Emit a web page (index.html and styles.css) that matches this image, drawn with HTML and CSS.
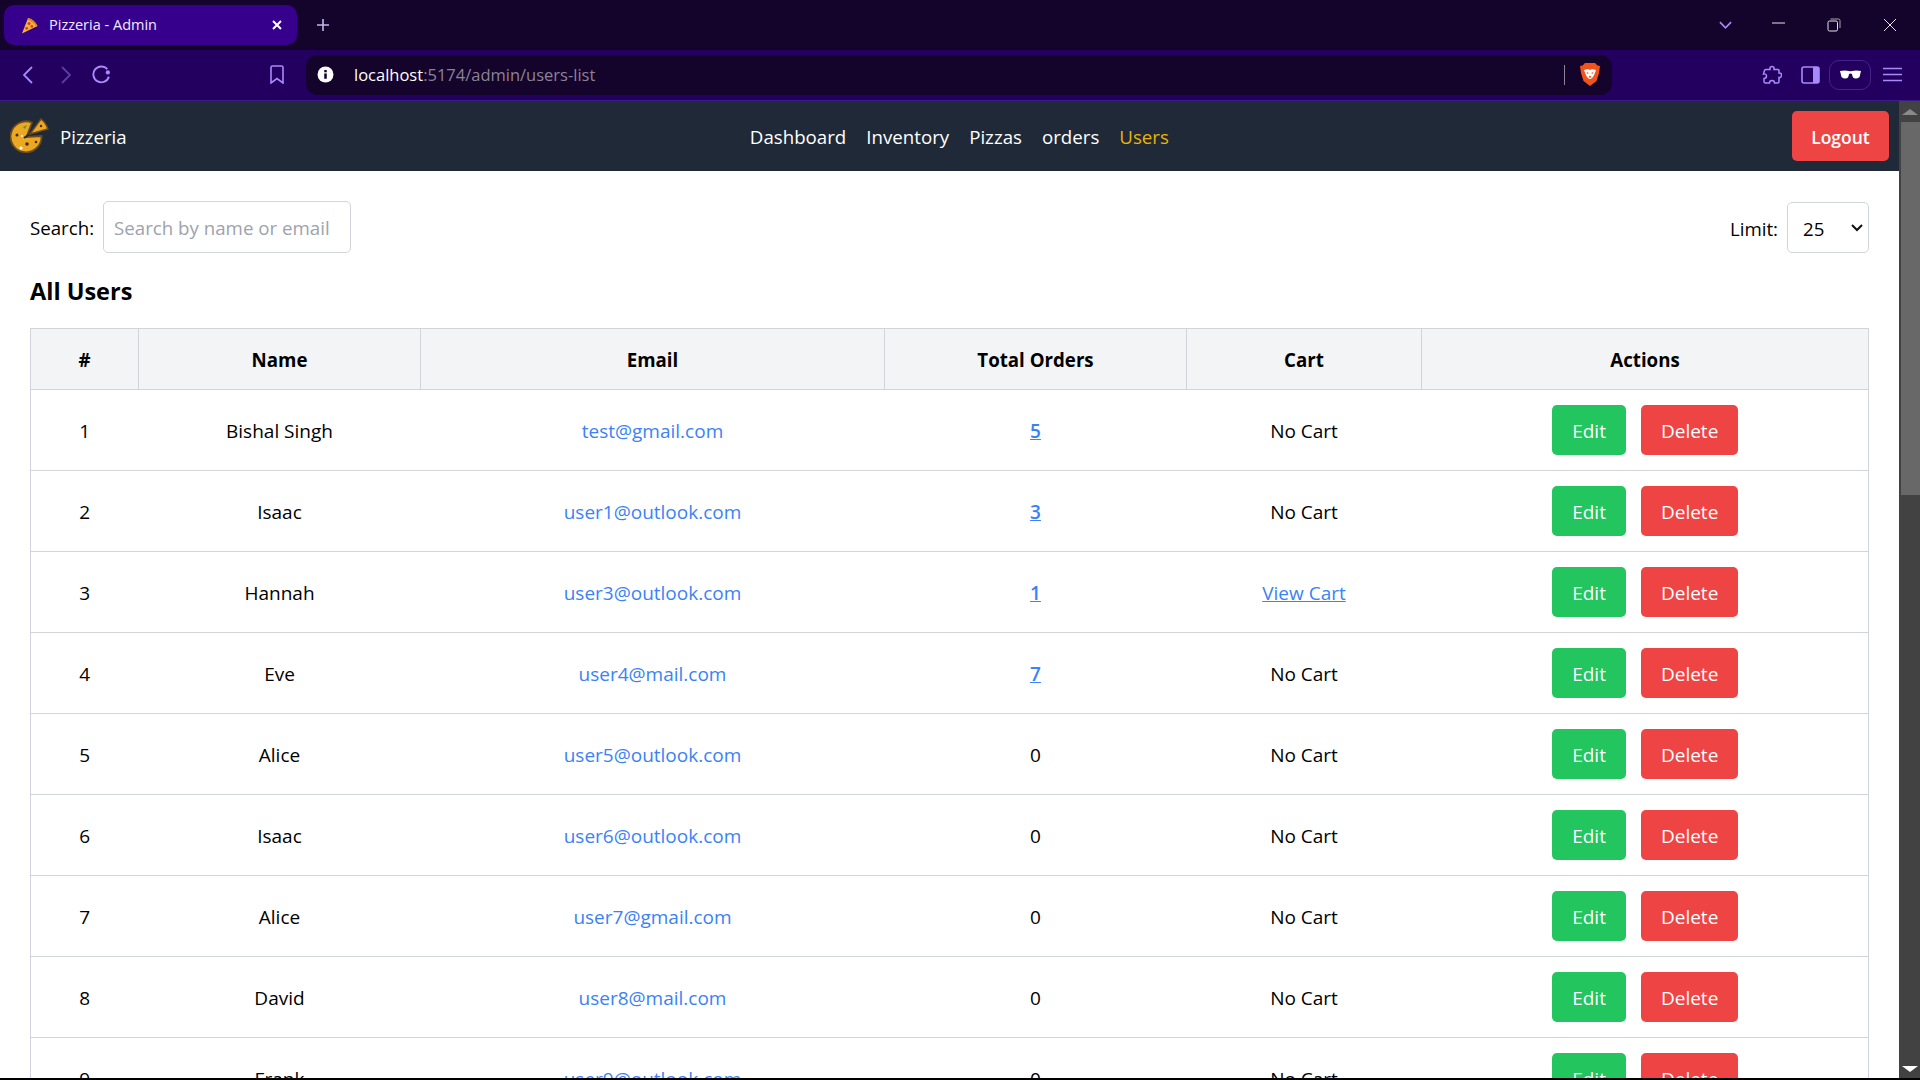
FILE: index.html
```html
<!DOCTYPE html>
<html lang="en">
<head>
<meta charset="utf-8">
<title>Pizzeria - Admin</title>
<link rel="stylesheet" href="styles.css">
</head>
<body>
<div class="titlebar">
  <div class="tab">
    <svg class="tab-favicon" viewBox="0 0 18 18"><path d="M1 17.500 L7.500 1 Q14 2.500 17.500 9.500 Z" fill="#f5b43a"/><path d="M7.500 1 Q14 2.500 17.500 9.500 L16 10.200 Q12.500 4.500 7 3 Z" fill="#d9832b"/><circle cx="8.500" cy="7" r="1.600" fill="#d6402b"/><circle cx="11.500" cy="10" r="1.500" fill="#d6402b"/><circle cx="6" cy="12" r="1.500" fill="#d6402b"/></svg>
    <span class="tab-title">Pizzeria - Admin</span>
    <svg class="tab-close" viewBox="0 0 12 12"><path d="M2 2 L10 10 M10 2 L2 10" stroke="#fff" stroke-width="2"/></svg>
  </div>
  <svg class="new-tab" viewBox="0 0 14 14"><path d="M7 1 V13 M1 7 H13" stroke="#c4b5f0" stroke-width="1.600"/></svg>
  <div class="window-controls">
    <svg class="win-chevron" viewBox="0 0 14 8"><path d="M1 1 L7 7 L13 1" fill="none" stroke="#a78bfa" stroke-width="1.800"/></svg>
    <svg class="win-icon" viewBox="0 0 14 14"><path d="M1 5 H14" stroke="#e5e5e5" stroke-width="1"/></svg>
    <svg class="win-icon" viewBox="0 0 14 14"><rect x="1" y="3" width="9.500" height="10" rx="1.500" fill="none" stroke="#e5e5e5"/><path d="M3.500 1 H11.500 Q13 1 13 2.500 V10" fill="none" stroke="#aaa"/></svg>
    <svg class="win-icon" viewBox="0 0 14 14"><path d="M1 1 L13 13 M13 1 L1 13" stroke="#e5e5e5" stroke-width="1"/></svg>
  </div>
</div>
<div class="toolbar">
  <svg class="tool-back" viewBox="0 0 10 18"><path d="M9 1 L1 9 L9 17" fill="none" stroke="#a78bfa" stroke-width="1.800"/></svg>
  <svg class="tool-forward" viewBox="0 0 10 18"><path d="M1 1 L9 9 L1 17" fill="none" stroke="#5b3fa0" stroke-width="1.800"/></svg>
  <svg class="tool-reload" viewBox="0 0 18 18"><path d="M14.500 4 A7.500 7.500 0 1 0 16 11" fill="none" stroke="#a78bfa" stroke-width="1.800"/><circle cx="15" cy="7" r="2" fill="#a78bfa"/></svg>
  <svg class="tool-bookmark" viewBox="0 0 14 19"><path d="M2.500 1 H11.500 Q13 1 13 2.500 V18 L7 13.500 L1 18 V2.500 Q1 1 2.500 1 Z" fill="none" stroke="#a78bfa" stroke-width="1.600"/></svg>
  <div class="urlbar">
    <svg class="url-info" viewBox="0 0 16 16"><circle cx="8" cy="8" r="7.500" fill="#fff"/><rect x="6.800" y="7" width="2.400" height="5" fill="#14032b"/><rect x="6.800" y="3.800" width="2.400" height="2.100" fill="#14032b"/></svg>
    <span class="url-text"><span class="url-host">localhost</span>:5174/admin/users-list</span>
    <span class="url-divider"></span>
    <svg class="url-brave" viewBox="0 0 20 23"><path d="M5 0 H15 L17.500 2.500 L20 3 L19 10 L16.500 18 L10 23 L3.500 18 L1 10 L0 3 L2.500 2.500 Z" fill="#f0531c"/><path d="M4 7 L8 6 L10 7 L12 6 L16 7 L14.500 11 L13 14 L10.800 16 H9.200 L7 14 L5.500 11 Z" fill="#fff"/><path d="M6.500 9 L9 10 L7.500 11 Z M13.500 9 L11 10 L12.500 11 Z M8.500 14 L10 12.500 L11.500 14 L10 15 Z" fill="#f0531c"/></svg>
  </div>
  <svg class="tool-puzzle" viewBox="0 0 20 20"><path d="M8 2.500 Q10 0.500 12 2.500 L12 4.500 L16 4.500 Q17 4.500 17 5.500 L17 8 Q20 8 19.500 10.500 Q19 13 17 12.500 L17 16.500 Q17 18 15.500 18 L12.500 18 Q12.500 15.500 10 15.500 Q7.500 15.500 7.500 18 L3.500 18 Q2 18 2 16.500 L2 13.500 Q4.500 13.500 4.500 11 Q4.500 8.500 1.500 9 L2.500 5.500 Q2.500 4.500 4 4.500 L8 4.500 Z" fill="none" stroke="#a78bfa" stroke-width="1.500"/></svg>
  <svg class="tool-sidebar" viewBox="0 0 19 18"><rect x="1" y="1" width="17" height="16" rx="2" fill="none" stroke="#a78bfa" stroke-width="1.600"/><path d="M12 1 H17 Q18 1 18 2 V16 Q18 17 17 17 H12 Z" fill="#a78bfa"/></svg>
  <div class="tool-private">
    <svg class="private-glasses" viewBox="0 0 21 9"><path d="M0 1 Q5 0 9 1 Q10.500 1.700 12 1 Q16 0 21 1 L19.500 7 Q18 8.500 15.500 8.500 Q12.500 8.500 12 4 Q10.500 3 9 4 Q8.500 8.500 5.500 8.500 Q3 8.500 1.500 7 Z" fill="#fff"/></svg>
  </div>
  <svg class="tool-menu" viewBox="0 0 19 15"><path d="M0 1.500 H19 M0 7.500 H19 M0 13.500 H19" stroke="#a78bfa" stroke-width="1.600"/></svg>
</div>
<div class="viewport">
  <div class="page">
    <nav class="navbar">
      <div class="brand">
        <svg class="brand-logo" viewBox="0 0 40 36"><path d="M31.500 19 A15.500 15.500 0 1 1 22 5.500 L16.500 20 Z" fill="#eaa823" stroke="#6b4a1c" stroke-width="1.800"/><path d="M14 21 L31 9" stroke="#1f2937" stroke-width="2"/><path d="M20 17 L31 2 Q36 6 38 12 Z" fill="#eaa823" stroke="#6b4a1c" stroke-width="1.500"/><circle cx="7" cy="18" r="1.500" fill="#4a2a10"/><circle cx="17" cy="27" r="1.800" fill="#4a2a10"/><circle cx="26" cy="25" r="1.300" fill="#4a2a10"/><circle cx="11" cy="31" r="1.600" fill="#fff"/><circle cx="12" cy="19" r="1" fill="#fff"/><circle cx="31" cy="9" r="1.200" fill="#4a2a10"/><path d="M13 10 L17 8 L15 12 Z" fill="#4f9a3a"/></svg>
        <span class="brand-name">Pizzeria</span>
      </div>
      <div class="nav-links">
        <a class="nav-link">Dashboard</a>
        <a class="nav-link">Inventory</a>
        <a class="nav-link">Pizzas</a>
        <a class="nav-link">orders</a>
        <a class="nav-link nav-link-active">Users</a>
      </div>
      <button class="btn btn-red btn-logout">Logout</button>
    </nav>
    <main class="content">
      <div class="filters">
        <label class="field">Search: <input class="search-input" type="text" placeholder="Search by name or email"></label>
        <label class="field"><span class="limit-label">Limit:</span>
          <span class="limit-select"><span>25</span><svg class="limit-chevron" viewBox="0 0 12 8"><path d="M1 1 L6 6 L11 1" fill="none" stroke="#111" stroke-width="2"/></svg></span>
        </label>
      </div>
      <h2 class="heading">All Users</h2>
      <table class="users">
        <colgroup><col class="c1"><col class="c2"><col class="c3"><col class="c4"><col class="c5"><col class="c6"></colgroup>
        <thead><tr><th>#</th><th>Name</th><th>Email</th><th>Total Orders</th><th>Cart</th><th>Actions</th></tr></thead>
        <tbody>
          <tr><td>1</td><td>Bishal Singh</td><td><a class="email">test@gmail.com</a></td><td><a class="orders">5</a></td><td>No Cart</td><td><div class="actions"><button class="btn btn-green">Edit</button><button class="btn btn-red">Delete</button></div></td></tr>
          <tr><td>2</td><td>Isaac</td><td><a class="email">user1@outlook.com</a></td><td><a class="orders">3</a></td><td>No Cart</td><td><div class="actions"><button class="btn btn-green">Edit</button><button class="btn btn-red">Delete</button></div></td></tr>
          <tr><td>3</td><td>Hannah</td><td><a class="email">user3@outlook.com</a></td><td><a class="orders">1</a></td><td><a class="cart">View Cart</a></td><td><div class="actions"><button class="btn btn-green">Edit</button><button class="btn btn-red">Delete</button></div></td></tr>
          <tr><td>4</td><td>Eve</td><td><a class="email">user4@mail.com</a></td><td><a class="orders">7</a></td><td>No Cart</td><td><div class="actions"><button class="btn btn-green">Edit</button><button class="btn btn-red">Delete</button></div></td></tr>
          <tr><td>5</td><td>Alice</td><td><a class="email">user5@outlook.com</a></td><td>0</td><td>No Cart</td><td><div class="actions"><button class="btn btn-green">Edit</button><button class="btn btn-red">Delete</button></div></td></tr>
          <tr><td>6</td><td>Isaac</td><td><a class="email">user6@outlook.com</a></td><td>0</td><td>No Cart</td><td><div class="actions"><button class="btn btn-green">Edit</button><button class="btn btn-red">Delete</button></div></td></tr>
          <tr><td>7</td><td>Alice</td><td><a class="email">user7@gmail.com</a></td><td>0</td><td>No Cart</td><td><div class="actions"><button class="btn btn-green">Edit</button><button class="btn btn-red">Delete</button></div></td></tr>
          <tr><td>8</td><td>David</td><td><a class="email">user8@mail.com</a></td><td>0</td><td>No Cart</td><td><div class="actions"><button class="btn btn-green">Edit</button><button class="btn btn-red">Delete</button></div></td></tr>
          <tr><td>9</td><td>Frank</td><td><a class="email">user9@outlook.com</a></td><td>0</td><td>No Cart</td><td><div class="actions"><button class="btn btn-green">Edit</button><button class="btn btn-red">Delete</button></div></td></tr>
        </tbody>
      </table>
    </main>
  </div>
  <div class="scrollbar">
    <span class="arrow-up"></span>
    <span class="thumb"></span>
    <span class="arrow-down"></span>
  </div>
</div>
<div class="screen-edge"></div>
</body>
</html>
```
FILE: styles.css
```css
* { box-sizing: border-box; }
html, body { margin: 0; height: 100%; }
body {
  display: flex;
  flex-direction: column;
  height: 1080px;
  overflow: hidden;
  background: #fff;
  color: #000;
  font-family: "Open Sans", "Noto Sans", sans-serif;
  font-size: 19px;
}
svg { display: block; flex: none; }

.titlebar {
  height: 50px;
  flex: none;
  display: flex;
  align-items: flex-start;
  background: #14032b;
  padding: 5px 0 0 4px;
}
.tab {
  width: 293px;
  height: 40px;
  background: #37008c;
  border-radius: 10px;
  display: flex;
  align-items: center;
  padding: 0 14px 0 17px;
}
.tab-favicon { width: 17px; height: 17px; }
.tab-title { flex: 1; margin-left: 11px; padding-bottom: 2px; color: #f1ecff; font-size: 14.500px; }
.tab-close { width: 12px; height: 12px; }
.new-tab { width: 14px; height: 14px; margin: 13px 0 0 19px; }
.window-controls {
  margin-left: auto;
  display: flex;
  align-items: center;
  height: 40px;
  padding-right: 23px;
}
.win-chevron { width: 13px; height: 8px; margin-right: 39px; }
.win-icon { width: 14px; height: 14px; margin-left: 42px; }
.win-icon:nth-child(2) { margin-left: 0; }

.toolbar {
  height: 51px;
  flex: none;
  display: flex;
  align-items: center;
  background: #23005f;
  border-bottom: 1px solid #3d1a8a;
  padding: 0 18px 1px 23px;
}
.tool-back { width: 10px; height: 18px; }
.tool-forward { width: 10px; height: 18px; margin-left: 28px; }
.tool-reload { width: 19px; height: 19px; margin-left: 21px; }
.tool-bookmark { width: 14px; height: 19px; margin-left: 159px; }
.urlbar {
  width: 1306px;
  height: 40px;
  margin-left: 22px;
  display: flex;
  align-items: center;
  background: #14032b;
  border-radius: 12px;
  padding: 0 12px 0 9px;
}
.url-info { width: 17px; height: 17px; margin-left: 2px; }
.url-text { margin-left: 20px; flex: 1; font-size: 16.500px; color: #8b8496; }
.url-host { color: #fff; }
.url-divider { width: 1px; height: 20px; background: #8b8496; margin-right: 15px; }
.url-brave { width: 20px; height: 23px; }
.tool-puzzle { width: 20px; height: 20px; margin-left: 150px; }
.tool-sidebar { width: 19px; height: 18px; margin-left: 19px; }
.tool-private {
  width: 42px;
  height: 30px;
  margin-left: 9px;
  border: 1px solid #43258a;
  border-radius: 10px;
  display: flex;
  align-items: center;
  justify-content: center;
}
.private-glasses { width: 21px; height: 9px; }
.tool-menu { width: 19px; height: 15px; margin-left: 12px; }

.viewport { flex: 1; min-height: 0; display: flex; }
.page { flex: 1; min-width: 0; overflow: hidden; }
.navbar {
  height: 70px;
  background: #1f2937;
  color: #fff;
  font-size: 18.700px;
  display: flex;
  align-items: center;
  justify-content: space-between;
  padding: 0 10px;
}
.brand { display: flex; align-items: center; gap: 10px; }
.brand-logo { width: 40px; height: 36px; margin-top: -2px; }
.brand-name { padding-top: 1px; }
.nav-links { display: flex; gap: 20px; padding-top: 1px; }
.nav-link { color: #fff; }
.nav-link-active { color: #eab308; }

.btn {
  height: 50px;
  border: 0;
  border-radius: 5px;
  padding: 0 20px;
  color: #fff;
  font-family: inherit;
  font-size: inherit;
}
.btn-red { background: #ef4444; }
.btn-green { background: #22c55e; }
.btn-logout { width: 97px; padding: 2px 0 0; font-size: 17.500px; font-weight: 600; }

.content { padding: 30px; }
.filters { display: flex; justify-content: space-between; align-items: center; font-size: 18.700px; }
.field { display: flex; align-items: center; gap: 9px; }
.limit-label { padding-top: 2px; }
.search-input {
  width: 248px;
  height: 52px;
  border: 1px solid #d1d5db;
  border-radius: 5px;
  padding: 0 10px 0 10px;
  font-family: inherit;
  font-size: inherit;
  color: #000;
}
.search-input::placeholder { color: #9ca3af; opacity: 1; }
.limit-select {
  width: 82px;
  height: 51px;
  border: 1px solid #d1d5db;
  border-radius: 5px;
  display: flex;
  align-items: center;
  justify-content: space-between;
  padding: 2px 5px 0 15px;
}
.limit-chevron { width: 12px; height: 8px; }
.heading { margin: 22px 0 20px; font-size: 23.500px; line-height: 33px; font-weight: 700; }

.users { width: 1838px; table-layout: fixed; border-collapse: collapse; }
.c1 { width: 108px; }
.c2 { width: 282px; }
.c3 { width: 464px; }
.c4 { width: 302px; }
.c5 { width: 235px; }
.c6 { width: 447px; }
.users th, .users td { border: 1px solid #d1d5db; text-align: center; }
.users th { height: 61px; padding: 1px 15px 0; background: #f3f4f6; font-size: 18.700px; font-weight: 700; }
.users td { height: 81px; padding: 16px 15px 14px; border-left-width: 0; border-right-width: 0; }
.users td:first-child { border-left-width: 1px; }
.users td:last-child { border-right-width: 1px; }
.email { color: #3b82f6; }
.orders { color: #3b82f6; font-weight: 600; text-decoration: underline; }
.cart { color: #3b82f6; text-decoration: underline; }
.actions { display: flex; justify-content: center; gap: 15px; margin: -1px 0 1px; padding-left: 1px; }
.actions .btn { padding-top: 1px; }

.scrollbar {
  width: 21px;
  flex: none;
  background: #424242;
  display: flex;
  flex-direction: column;
  align-items: flex-end;
}
.arrow-up {
  margin: 8px 2px 0 0;
  width: 0;
  height: 0;
  border-left: 8px solid transparent;
  border-right: 8px solid transparent;
  border-bottom: 6px solid #8a8a8a;
}
.thumb { width: 19px; height: 373px; margin-top: 7px; background: #686868; }
.arrow-down {
  margin: auto 2px 6px 0;
  width: 0;
  height: 0;
  border-left: 8px solid transparent;
  border-right: 8px solid transparent;
  border-top: 6px solid #fff;
}
.screen-edge { height: 2px; flex: none; background: #000; }
```
